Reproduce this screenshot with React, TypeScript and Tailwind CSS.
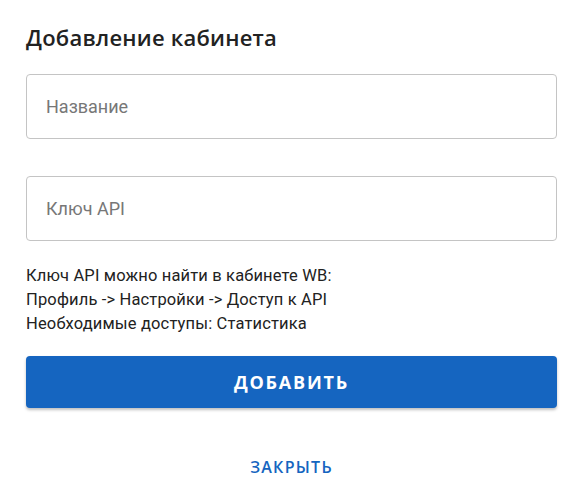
import React from "react";

const inputCls =
  "h-[65px] w-full rounded-[4px] border border-[#c4c4c4] px-[19px] text-[18px] text-[#222] placeholder:text-[#777] outline-none font-['Roboto',sans-serif]";

export default function App() {
  return (
    <div className="w-[585px] h-[495px] bg-white pl-[26px] pt-[23px]">
      <div className="w-[531px]">
        <h2 className="text-[22px] leading-[28px] font-semibold text-[#222] tracking-[0.01em] font-['Open_Sans','Noto_Sans',sans-serif]">
          Добавление кабинета
        </h2>

        <div className="mt-[23px] flex flex-col gap-[37px]">
          <input placeholder="Название" className={inputCls} />
          <input placeholder="Ключ API" className={inputCls} />
        </div>

        <div className="mt-[23px] text-[16.5px] leading-[24px] tracking-[0.15px] text-[#222] font-['Roboto',sans-serif]">
          <p>Ключ API можно найти в кабинете WB:</p>
          <p>Профиль -&gt; Настройки -&gt; Доступ к API</p>
          <p>Необходимые доступы: Статистика</p>
        </div>

        <button className="mt-[20px] h-[52px] w-full rounded-[4px] bg-[#1565c0] text-white text-[18px] font-bold tracking-[0.1em] shadow-[0_2px_3px_rgba(0,0,0,0.25)] font-['Open_Sans','Noto_Sans',sans-serif]">
          ДОБАВИТЬ
        </button>

        <div className="mt-[49px] flex justify-center">
          <button className="text-[16px] leading-[20px] font-semibold tracking-[0.08em] text-[#1565c0] font-['Open_Sans','Noto_Sans',sans-serif]">
            ЗАКРЫТЬ
          </button>
        </div>
      </div>
    </div>
  );
}
